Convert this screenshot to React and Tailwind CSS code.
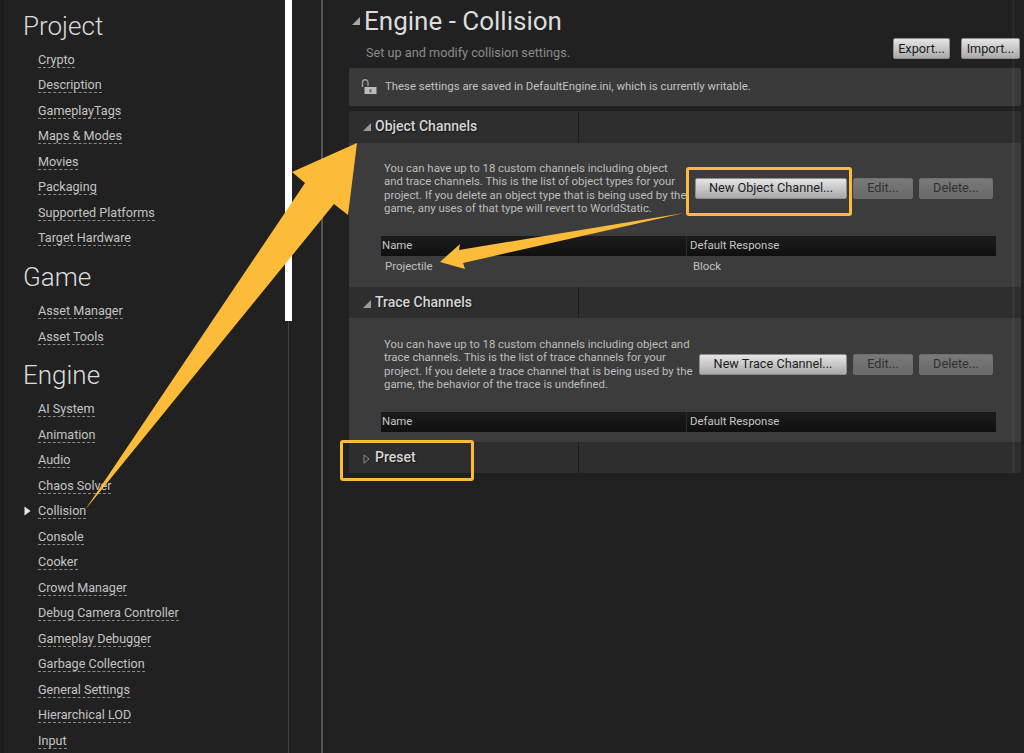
function Item({ label, active }) {
  return (
    <div className="relative h-[25.54px] flex items-center pl-[15px]">
      {active && (
        <svg className="absolute left-[1px] top-[8px]" width="7" height="10" viewBox="0 0 7 10">
          <path d="M0.5 0.5 L6.5 5 L0.5 9.5 Z" fill="#e6e6e6" />
        </svg>
      )}
      <span className="text-[12.6px] leading-[15px] text-[#c4c4c4] border-b border-dashed border-[#8a8a8a]">{label}</span>
    </div>
  );
}

function Group({ title, items, active, className }) {
  return (
    <div className={className}>
      <h2 className="text-[26px] leading-[30px] font-light text-[#dcdcdc] mb-[6px]">{title}</h2>
      {items.map((i) => (
        <Item key={i} label={i} active={i === active} />
      ))}
    </div>
  );
}

function Btn({ children, disabled, className = "" }) {
  return disabled ? (
    <button className={`h-[21px] flex items-center justify-center rounded-[2px] border border-[#6f6f6f] bg-gradient-to-b from-[#7a7a7a] to-[#686868] text-[12.7px] text-[#303030] ${className}`}>
      {children}
    </button>
  ) : (
    <button className={`h-[21px] flex items-center justify-center rounded-[2px] border border-[#8d8d8d] bg-gradient-to-b from-[#e6e6e6] to-[#a9a9a9] text-[12.7px] text-[#1c1c1c] ${className}`}>
      {children}
    </button>
  );
}

function SectionHeader({ title, open, className = "", innerClass = "" }) {
  return (
    <div className={`flex bg-[#2e2e2e] ${className}`}>
      <div className={`w-[230px] flex items-center pl-[14px] border-r border-[#1c1c1c] ${innerClass}`}>
        {open ? (
          <svg width="8" height="8" viewBox="0 0 8 8" className="mr-[4px] mt-[2px]">
            <path d="M0 8 L8 8 L8 0 Z" fill="#9a9a9a" />
          </svg>
        ) : (
          <svg width="7" height="10" viewBox="0 0 7 10" className="mr-[5px] mt-[2px]">
            <path d="M1 0.8 L6 5 L1 9.2 Z" fill="none" stroke="#8a8a8a" strokeWidth="1" />
          </svg>
        )}
        <span className="text-[14px] font-medium text-[#d6d6d6] [text-shadow:1px_1px_1px_#151515]">{title}</span>
      </div>
    </div>
  );
}

function TableHead() {
  return (
    <div className="ml-[32px] mr-[25px] h-[20px] flex items-center bg-gradient-to-b from-[#1c1c1c] to-[#101010] text-[11.4px] text-[#c6c6c6]">
      <div className="w-[306px] h-full flex items-center pl-[1px] border-r border-[#2c2c2c]">Name</div>
      <div className="pl-[3px]">Default Response</div>
    </div>
  );
}

function Description({ lines }) {
  return (
    <div className="w-[310px] text-[11.4px] leading-[13.5px] pt-[1px] text-[#bcbcbc]">
      {lines.map((l) => (
        <div key={l} className="whitespace-nowrap">{l}</div>
      ))}
    </div>
  );
}

export default function App() {
  return (
    <div
      className="relative flex w-[1024px] h-[753px] overflow-hidden bg-[#212121]"
      style={{ fontFamily: "Roboto, sans-serif" }}
    >
      <aside className="w-[284px] shrink-0 pl-[23px] pt-[11px] border-l-[4px] border-[#1d1d1d] box-border">
        <div className="-ml-[4px]">
          <Group
            title="Project"
            items={["Crypto", "Description", "GameplayTags", "Maps & Modes", "Movies", "Packaging", "Supported Platforms", "Target Hardware"]}
          />
          <Group title="Game" className="mt-[11px]" items={["Asset Manager", "Asset Tools"]} />
          <Group
            title="Engine"
            active="Collision"
            className="mt-[11px]"
            items={["AI System", "Animation", "Audio", "Chaos Solver", "Collision", "Console", "Cooker", "Crowd Manager", "Debug Camera Controller", "Gameplay Debugger", "Garbage Collection", "General Settings", "Hierarchical LOD", "Input"]}
          />
        </div>
      </aside>

      <div className="w-[8px] shrink-0 flex flex-col items-center">
        <div className="w-[7px] h-[321px] bg-white" />
        <div className="w-[1px] flex-1 bg-[#3f3f3f]" />
      </div>

      <div className="w-[31px] shrink-0 border-r-2 border-[#555555]" />

      <main className="flex-1 pl-[26px] pr-[3px]">
        <div className="flex items-center h-[42px] pl-[3px]">
          <svg width="8" height="8" viewBox="0 0 8 8" className="mr-[4px] mt-[-1px]">
            <path d="M0 8 L8 8 L8 0 Z" fill="#a8a8a8" />
          </svg>
          <h1 className="text-[26px] leading-[30px] font-normal text-[#dcdcdc] -mt-[1px]">Engine - Collision</h1>
        </div>
        <div className="flex items-start h-[26px]">
          <p className="pl-[17px] pt-[1px] text-[12.7px] leading-[20px] text-[#8c8c8c]">Set up and modify collision settings.</p>
          <div className="ml-auto flex gap-[11px] -mt-[4px] pr-[1px]">
            <Btn className="w-[57px]">Export...</Btn>
            <Btn className="w-[59px]">Import...</Btn>
          </div>
        </div>

        <div className="h-[38px] rounded-[2px] bg-[#3a3a3a] flex items-center pl-[12px] text-[11.4px] text-[#c2c2c2]">
          <svg width="16" height="16" viewBox="0 0 16 16" className="mr-[8px]">
            <path d="M1.5 8 V3.5 A2.7 2.7 0 0 1 7 3.5 V7" fill="none" stroke="#a0a0a0" strokeWidth="1.3" />
            <rect x="3.5" y="8" width="12" height="7" rx="0.5" fill="#bdbdbd" />
            <rect x="8.5" y="10" width="2" height="3.5" fill="#6a6a6a" />
          </svg>
          These settings are saved in DefaultEngine.ini, which is currently writable.
        </div>

        <div className="mt-[5px] rounded-t-[2px] overflow-hidden">
          <SectionHeader title="Object Channels" open className="h-[32px]" innerClass="pb-[2px]" />
          <div className="h-[144px] bg-[#3c3c3c] pt-[18px]">
            <div className="flex items-center h-[54px] pl-[35px] pr-[28px]">
              <Description
                lines={[
                  "You can have up to 18 custom channels including object",
                  "and trace channels. This is the list of object types for your",
                  "project. If you delete an object type that is being used by the",
                  "game, any uses of that type will revert to WorldStatic.",
                ]}
              />
              <div className="ml-auto flex gap-[6px]">
                <Btn className="w-[152px]">New Object Channel...</Btn>
                <Btn disabled className="w-[60px]">Edit...</Btn>
                <Btn disabled className="w-[74px]">Delete...</Btn>
              </div>
            </div>
            <div className="mt-[21px]">
              <TableHead />
            </div>
            <div className="flex h-[21px] items-center text-[11.4px] text-[#c0c0c0] ml-[36px]">
              <div className="w-[308px]">Projectile</div>
              <div>Block</div>
            </div>
          </div>

          <SectionHeader title="Trace Channels" open className="h-[31px]" />
          <div className="h-[124px] bg-[#3c3c3c] pt-[19px]">
            <div className="flex items-center h-[54px] pl-[35px] pr-[28px]">
              <Description
                lines={[
                  "You can have up to 18 custom channels including object and",
                  "trace channels. This is the list of trace channels for your",
                  "project. If you delete a trace channel that is being used by the",
                  "game, the behavior of the trace is undefined.",
                ]}
              />
              <div className="ml-auto flex gap-[6px]">
                <Btn className="w-[148px]">New Trace Channel...</Btn>
                <Btn disabled className="w-[60px]">Edit...</Btn>
                <Btn disabled className="w-[74px]">Delete...</Btn>
              </div>
            </div>
            <div className="mt-[21px]">
              <TableHead />
            </div>
          </div>

          <SectionHeader title="Preset" className="h-[31px]" />
        </div>
      </main>

      {/* faint band lying over the panels */}
      <div className="absolute left-[1012px] top-0 w-[3px] h-[473px] bg-white/[0.04]" />

      {/* annotation overlays */}
      <div className="absolute left-[686px] top-[167px] w-[166px] h-[49px] rounded-[3px] border-[3px] border-[#fdbb3a]" />
      <div className="absolute left-[340px] top-[440px] w-[134px] h-[41px] rounded-[3px] border-[3px] border-[#fdbb3a]" />
      <svg className="absolute left-0 top-0 pointer-events-none" width="1024" height="753" viewBox="0 0 1024 753">
        <path d="M85 510 L305 183 L292 172 L357 143 L348 215 L334 204 Z" fill="#fdbb3a" />
        <path d="M684 213 L459 250 L460 244 L440 262 L465 269 L463 263 Z" fill="#fdbb3a" />
      </svg>
    </div>
  );
}
